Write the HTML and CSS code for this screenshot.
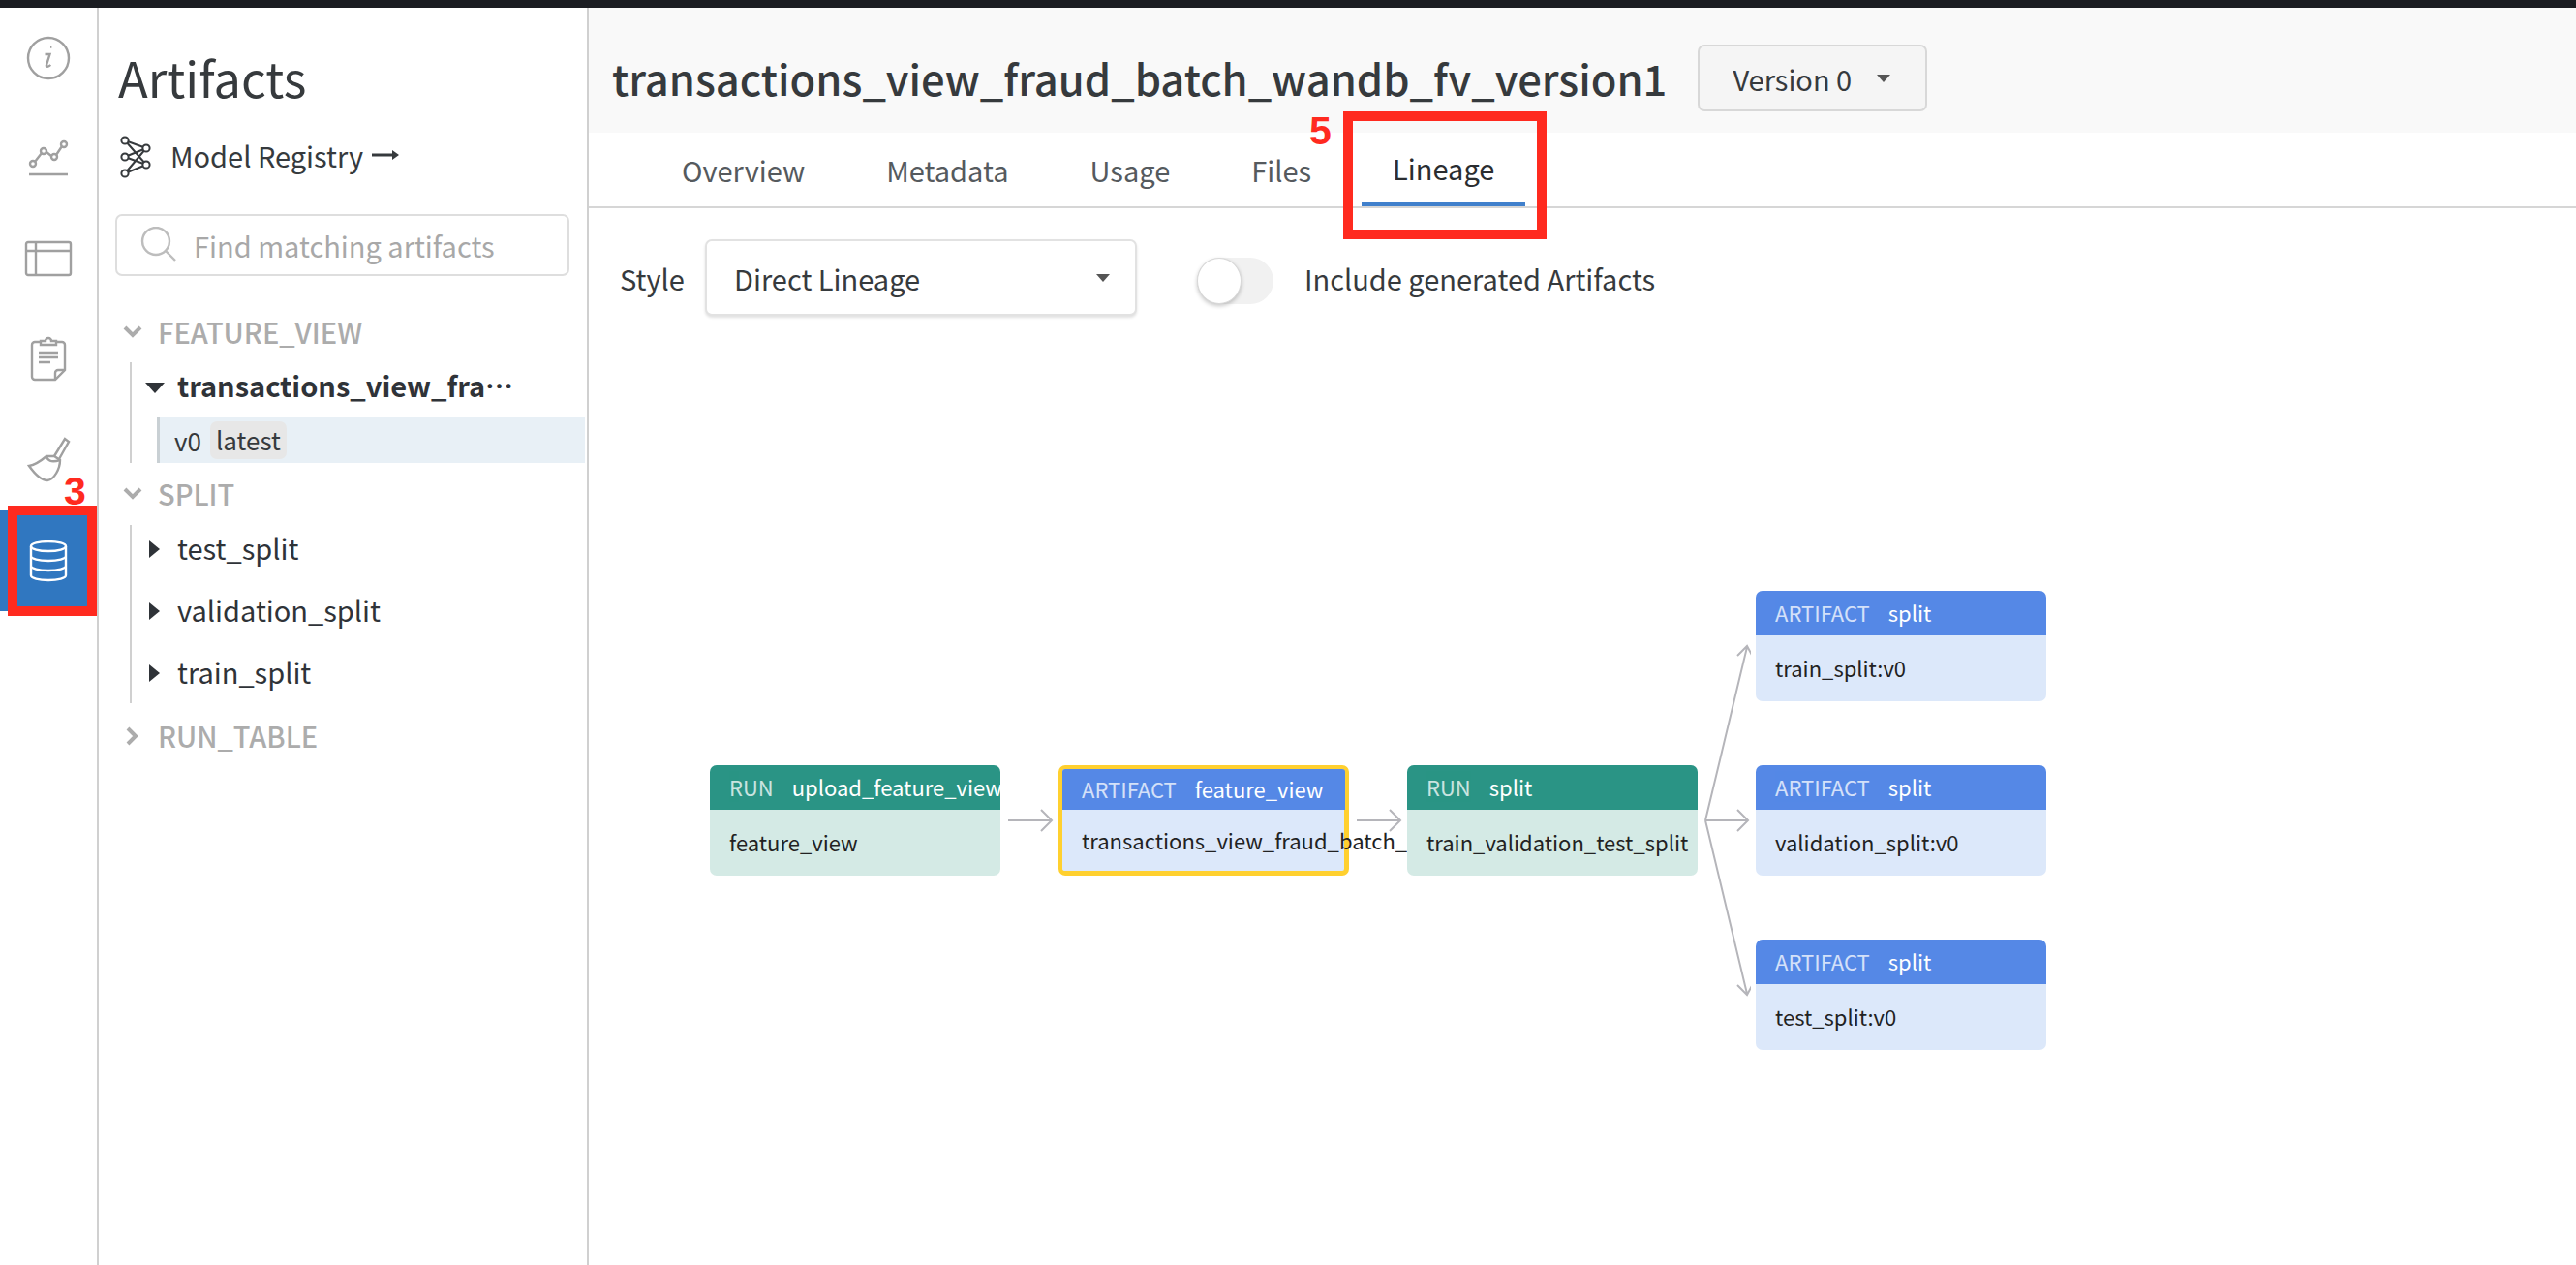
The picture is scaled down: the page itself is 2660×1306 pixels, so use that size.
FILE: index.html
```html
<!DOCTYPE html>
<html lang="en">
<head>
<meta charset="utf-8">
<title>Artifacts</title>
<link rel="stylesheet" href="styles.css">
</head>
<body>
<div class="topbar"></div>
<div class="app">
  <nav class="rail">
    <div class="rail-item">
      <svg class="ic" width="48" height="48" viewBox="0 0 48 48"><circle cx="24" cy="24" r="21"/><path d="M26 12.5h1.4M20.5 20h5l-3.6 11.5c-.3 1.8 2 1.8 4.4-.5"/></svg>
    </div>
    <div class="rail-item">
      <svg class="ic" width="44" height="40" viewBox="0 0 44 40"><circle cx="6" cy="25" r="3"/><circle cx="17" cy="12" r="3"/><circle cx="28" cy="18" r="3"/><circle cx="38" cy="5" r="3"/><path d="M8 23l7-9M20 13l5 4M30 16l6-9M2 36h40"/></svg>
    </div>
    <div class="rail-item">
      <svg class="ic" width="50" height="38" viewBox="0 0 50 38"><rect x="2" y="2" width="46" height="34" rx="2"/><path d="M2 11h46M12 2v34"/></svg>
    </div>
    <div class="rail-item">
      <svg class="ic" width="40" height="48" viewBox="0 0 40 48"><path d="M12 6H6a3 3 0 0 0-3 3v33a3 3 0 0 0 3 3h21l10-10V9a3 3 0 0 0-3-3h-6"/><path d="M12 9V5h5a3 3 0 0 1 6 0h5v4z"/><path d="M10 17h20M10 22h20M10 27h12M27 45v-7a3 3 0 0 1 3-3h7"/></svg>
    </div>
    <div class="rail-item">
      <svg class="ic" width="46" height="50" viewBox="0 0 46 50"><path d="M29 21L40 3l4 3-10 18"/><path d="M3 31c7-1 12-5 18-10l8 0 6 4c0 9-6 20-13 21-7 0-14-8-19-15z"/><path d="M21 21c1 4 4 7 14 4"/></svg>
    </div>
    <div class="rail-item rail-active">
      <svg class="ic" width="42" height="46" viewBox="0 0 42 46"><ellipse cx="21" cy="8" rx="18" ry="5"/><path d="M3 8v30c0 3 8 5 18 5s18-2 18-5V8M3 18c0 3 8 5 18 5s18-2 18-5M3 28c0 3 8 5 18 5s18-2 18-5"/></svg>
    </div>
  </nav>

  <aside class="side">
    <h1 class="side-title">Artifacts</h1>
    <div class="registry">
      <svg class="net" width="36" height="46" viewBox="0 0 36 46"><path d="M7 6l22 8M7 6l22 25M7 23l22-9M7 23l22 8M7 40l22-26M7 40l22-9"/><circle cx="7" cy="6" r="3.6"/><circle cx="7" cy="23" r="3.6"/><circle cx="7" cy="40" r="3.6"/><circle cx="29" cy="14" r="3.6"/><circle cx="29" cy="31" r="3.6"/></svg>
      <span>Model Registry</span>
      <svg class="reg-arrow" width="30" height="14" viewBox="0 0 30 14"><path d="M1 7h22" /><path class="fill" d="M22 2l7 5-7 5z"/></svg>
    </div>
    <div class="search">
      <svg class="search-ic" width="38" height="38" viewBox="0 0 38 38"><circle cx="16" cy="15" r="14"/><path d="M26 25l10 10"/></svg>
      <span>Find matching artifacts</span>
    </div>
    <div class="tree">
      <div class="sec">
        <svg class="chev" width="20" height="14" viewBox="0 0 20 14"><path d="M2 2l8 8 8-8"/></svg>
        <span>FEATURE_VIEW</span>
      </div>
      <div class="group">
        <div class="item item-open">
          <svg class="tri" width="20" height="11" viewBox="0 0 20 11"><path d="M0 0h20L10 11z"/></svg>
          <span class="item-name">transactions_view_fraud_batch_wandb_fv_version1</span>
        </div>
        <div class="version">
          <span>v0</span>
          <span class="chip">latest</span>
        </div>
      </div>
      <div class="sec sec-next">
        <svg class="chev" width="20" height="14" viewBox="0 0 20 14"><path d="M2 2l8 8 8-8"/></svg>
        <span>SPLIT</span>
      </div>
      <div class="group group-list">
        <div class="item">
          <svg class="tri-r" width="11" height="18" viewBox="0 0 11 18"><path d="M0 0l11 9-11 9z"/></svg>
          <span>test_split</span>
        </div>
        <div class="item">
          <svg class="tri-r" width="11" height="18" viewBox="0 0 11 18"><path d="M0 0l11 9-11 9z"/></svg>
          <span>validation_split</span>
        </div>
        <div class="item">
          <svg class="tri-r" width="11" height="18" viewBox="0 0 11 18"><path d="M0 0l11 9-11 9z"/></svg>
          <span>train_split</span>
        </div>
      </div>
      <div class="sec sec-last">
        <svg class="chev chev-r" width="20" height="20" viewBox="0 0 20 20"><path d="M5 2l8 8-8 8"/></svg>
        <span>RUN_TABLE</span>
      </div>
    </div>
  </aside>

  <main class="main">
    <header class="head">
      <h2 class="title">transactions_view_fraud_batch_wandb_fv_version1</h2>
      <button class="version-btn"><span>Version 0</span><i class="caret"></i></button>
    </header>
    <div class="tabs">
      <div class="tab">Overview</div>
      <div class="tab">Metadata</div>
      <div class="tab">Usage</div>
      <div class="tab">Files</div>
      <div class="tab tab-active">Lineage</div>
    </div>
    <div class="controls">
      <span class="style-label">Style</span>
      <div class="select"><span>Direct Lineage</span><i class="caret"></i></div>
      <div class="toggle"><div class="knob"></div></div>
      <span class="toggle-label">Include generated Artifacts</span>
    </div>
    <div class="graph">
      <svg class="edges" width="1200" height="900" viewBox="608 326 1200 900">
        <path d="M1041 847h44M1075 836l11 11-11 11"/>
        <path d="M1401 847h44M1435 836l11 11-11 11"/>
        <path d="M1761 847h44M1794 836l11 11-11 11"/>
        <path d="M1761 847L1804 668M1794 677l10-10 7 13"/>
        <path d="M1761 847L1804 1026M1794 1017l10 10 7-13"/>
      </svg>
      <div class="node run n1">
        <div class="node-head"><span class="kind">RUN</span><span>upload_feature_view</span></div>
        <div class="node-body">feature_view</div>
      </div>
      <div class="node art sel n2">
        <div class="node-head"><span class="kind">ARTIFACT</span><span>feature_view</span></div>
        <div class="node-body">transactions_view_fraud_batch_wandb_fv_version1:v0</div>
      </div>
      <div class="node run n3">
        <div class="node-head"><span class="kind">RUN</span><span>split</span></div>
        <div class="node-body">train_validation_test_split</div>
      </div>
      <div class="node art n4">
        <div class="node-head"><span class="kind">ARTIFACT</span><span>split</span></div>
        <div class="node-body">train_split:v0</div>
      </div>
      <div class="node art n5">
        <div class="node-head"><span class="kind">ARTIFACT</span><span>split</span></div>
        <div class="node-body">validation_split:v0</div>
      </div>
      <div class="node art n6">
        <div class="node-head"><span class="kind">ARTIFACT</span><span>split</span></div>
        <div class="node-body">test_split:v0</div>
      </div>
    </div>
  </main>
</div>
<div class="mark mark-db"></div>
<div class="num num-3">3</div>
<div class="mark mark-tab"></div>
<div class="num num-5">5</div>
</body>
</html>
```
FILE: styles.css
```css
* { box-sizing: border-box; }
html, body { margin: 0; height: 100%; }
body {
  width: 2660px;
  height: 1306px;
  overflow: hidden;
  background: #fff;
  color: #363a3d;
  font-family: "Noto Sans CJK SC", "Noto Sans", sans-serif;
  font-size: 29px;
  position: relative;
  display: flex;
  flex-direction: column;
}
.topbar { height: 8px; background: #1b1d22; flex: none; }
.app { flex: 1; display: flex; min-height: 0; }

/* icon rail */
.rail { width: 102px; flex: none; border-right: 2px solid #d0d0d0; display: flex; flex-direction: column; }
.rail-item { height: 103.8px; display: flex; align-items: center; justify-content: center; }
.rail-active { background: #3077c0; }
.ic { fill: none; stroke: #a0a0a0; stroke-width: 2.4; }
.rail-active .ic { stroke: #fff; }

/* sidebar */
.side { width: 506px; flex: none; border-right: 2px solid #d0d0d0; padding: 39px 18px 0 17px; }
.side-title { margin: 0; font-size: 50.5px; font-weight: 400; line-height: 64px; padding-left: 3px; }
.registry { margin-top: 26px; height: 46px; display: flex; align-items: center; padding-left: 3px; }
.net { fill: #fff; stroke: #363a3d; stroke-width: 2; flex: none; margin-top: 3px; }
.registry span { margin-left: 18px; }
.reg-arrow { margin-left: 8px; fill: none; stroke: #363a3d; stroke-width: 3; }
.reg-arrow .fill { fill: #363a3d; stroke: none; }
.search { margin-top: 38px; height: 64px; border: 2px solid #dedede; border-radius: 7px; display: flex; align-items: center; padding-left: 24px; color: #a8a8a8; }
.search-ic { fill: none; stroke: #bdbdbd; stroke-width: 2.4; flex: none; }
.search span { margin-left: 17px; }
.tree { margin-top: 38px; }
.sec { height: 40px; display: flex; align-items: center; color: #acacac; font-weight: 500; padding-left: 8px; margin-bottom: 11px; }
.sec span { margin-left: 16px; margin-top: -3px; }
.sec-next { margin-top: 12px; margin-bottom: 12px; }
.sec-last { margin-top: 14px; }
.chev { fill: none; stroke: #acacac; stroke-width: 4; flex: none; }
.group { margin-left: 15px; border-left: 2px solid #d0d0d0; }
.group-list { display: flex; flex-direction: column; gap: 12px; padding-bottom: 4px; }
.item { height: 52px; display: flex; align-items: center; padding-left: 18px; color: #2f3338; }
.item-open { font-weight: 700; margin-bottom: 4px; padding-left: 14px; }
.item-name { margin-left: 13px; margin-top: -6px; width: 362px; overflow: hidden; white-space: nowrap; text-overflow: ellipsis; }
.tri { fill: #2f3338; flex: none; }
.tri-r { fill: #2f3338; flex: none; margin-top: -2px; }
.item > span:not(.item-name) { margin-left: 18px; margin-top: -6px; }
.version { margin: 0 -16px 0 26px; height: 48px; background: #e8f0f6; border-left: 3px solid #c9d0d4; display: flex; align-items: center; padding-left: 15px; font-size: 26px; }
.chip { margin-left: 9px; background: #e7e7e7; border-radius: 7px; padding: 0 6px; height: 39px; line-height: 37px; }

/* main */
.main { flex: 1; min-width: 0; display: flex; flex-direction: column; }
.head { height: 129px; background: #f9f9f9; display: flex; align-items: center; padding: 16px 0 0 24px; flex: none; }
.title { margin: 0; font-size: 43.5px; font-weight: 500; line-height: 60px; white-space: nowrap; }
.version-btn { margin-left: 32px; width: 237px; height: 69px; background: #f5f5f5; border: 2px solid #d8d8d8; border-radius: 7px; display: flex; align-items: center; justify-content: space-between; padding: 0 36px 0 34px; color: #363a3d; font: inherit; }
.caret { width: 0; height: 0; border-left: 7px solid transparent; border-right: 7px solid transparent; border-top: 8px solid #555; flex: none; }
.tabs { height: 78px; border-bottom: 2px solid #d6d6d6; display: flex; gap: 20px; padding-left: 64px; flex: none; }
.tab { height: 76px; padding: 0 32px; display: flex; align-items: center; color: #555a5e; }
.tab-active { color: #2a2d30; border-bottom: 4px solid #4080cc; }
.controls { display: flex; align-items: center; padding: 32px 0 0 32px; height: 111px; flex: none; }
.style-label { width: 88px; }
.select { width: 446px; height: 79px; background: #fff; border: 2px solid #e2e2e2; border-radius: 7px; box-shadow: 0 2px 3px rgba(0,0,0,.12); display: flex; align-items: center; justify-content: space-between; padding: 0 26px 0 28px; }
.toggle { margin: 6px 0 0 62px; width: 79px; height: 48px; border-radius: 24px; background: #f1f1f1; position: relative; }
.knob { width: 46px; height: 48px; border-radius: 50%; background: #fff; border: 1px solid #d8d8d8; box-shadow: 0 2px 4px rgba(0,0,0,.22); }
.toggle-label { margin-left: 32px; }

/* lineage graph: free canvas */
.graph { position: relative; flex: 1; }
.edges { position: absolute; left: 0; top: 0; fill: none; stroke: #b5b5ba; stroke-width: 2; }
.node { position: absolute; width: 300px; height: 114px; border-radius: 7px; font-size: 22px; color: #222; }
.node-head { height: 46px; border-radius: 7px 7px 0 0; display: flex; align-items: center; gap: 19px; padding: 0 0 3px 20px; color: #fff; white-space: nowrap; overflow: hidden; }
.kind { opacity: .75; }
.node-body { height: 68px; padding: 0 0 2px 20px; display: flex; align-items: center; white-space: nowrap; }
.run { background: #d4eae5; }
.run .node-head { background: #2a9485; }
.art { background: #dce8fa; }
.art .node-head { background: #5588e6; }
.sel { border: 4px solid #ffd02f; border-bottom-width: 5px; border-right-width: 5px; }
.sel .node-head { height: 42px; border-radius: 3px 3px 0 0; margin-right: -1px; }
.sel .node-body { height: 63px; }
.n1 { left: 125px; top: 464px; }
.n2 { left: 485px; top: 464px; }
.n3 { left: 845px; top: 464px; }
.n4 { left: 1205px; top: 284px; }
.n5 { left: 1205px; top: 464px; }
.n6 { left: 1205px; top: 644px; }

/* red annotations over the screenshot */
.mark { position: absolute; border: 10px solid #ff2a1f; }
.mark-db { left: 8px; top: 522px; width: 92px; height: 114px; }
.mark-tab { left: 1387px; top: 115px; width: 210px; height: 132px; }
.num { position: absolute; color: #ff2a1f; font-family: "Liberation Sans", sans-serif; font-weight: 700; font-size: 41px; line-height: 40px; }
.num-3 { left: 66px; top: 487px; }
.num-5 { left: 1352px; top: 115px; }
```
